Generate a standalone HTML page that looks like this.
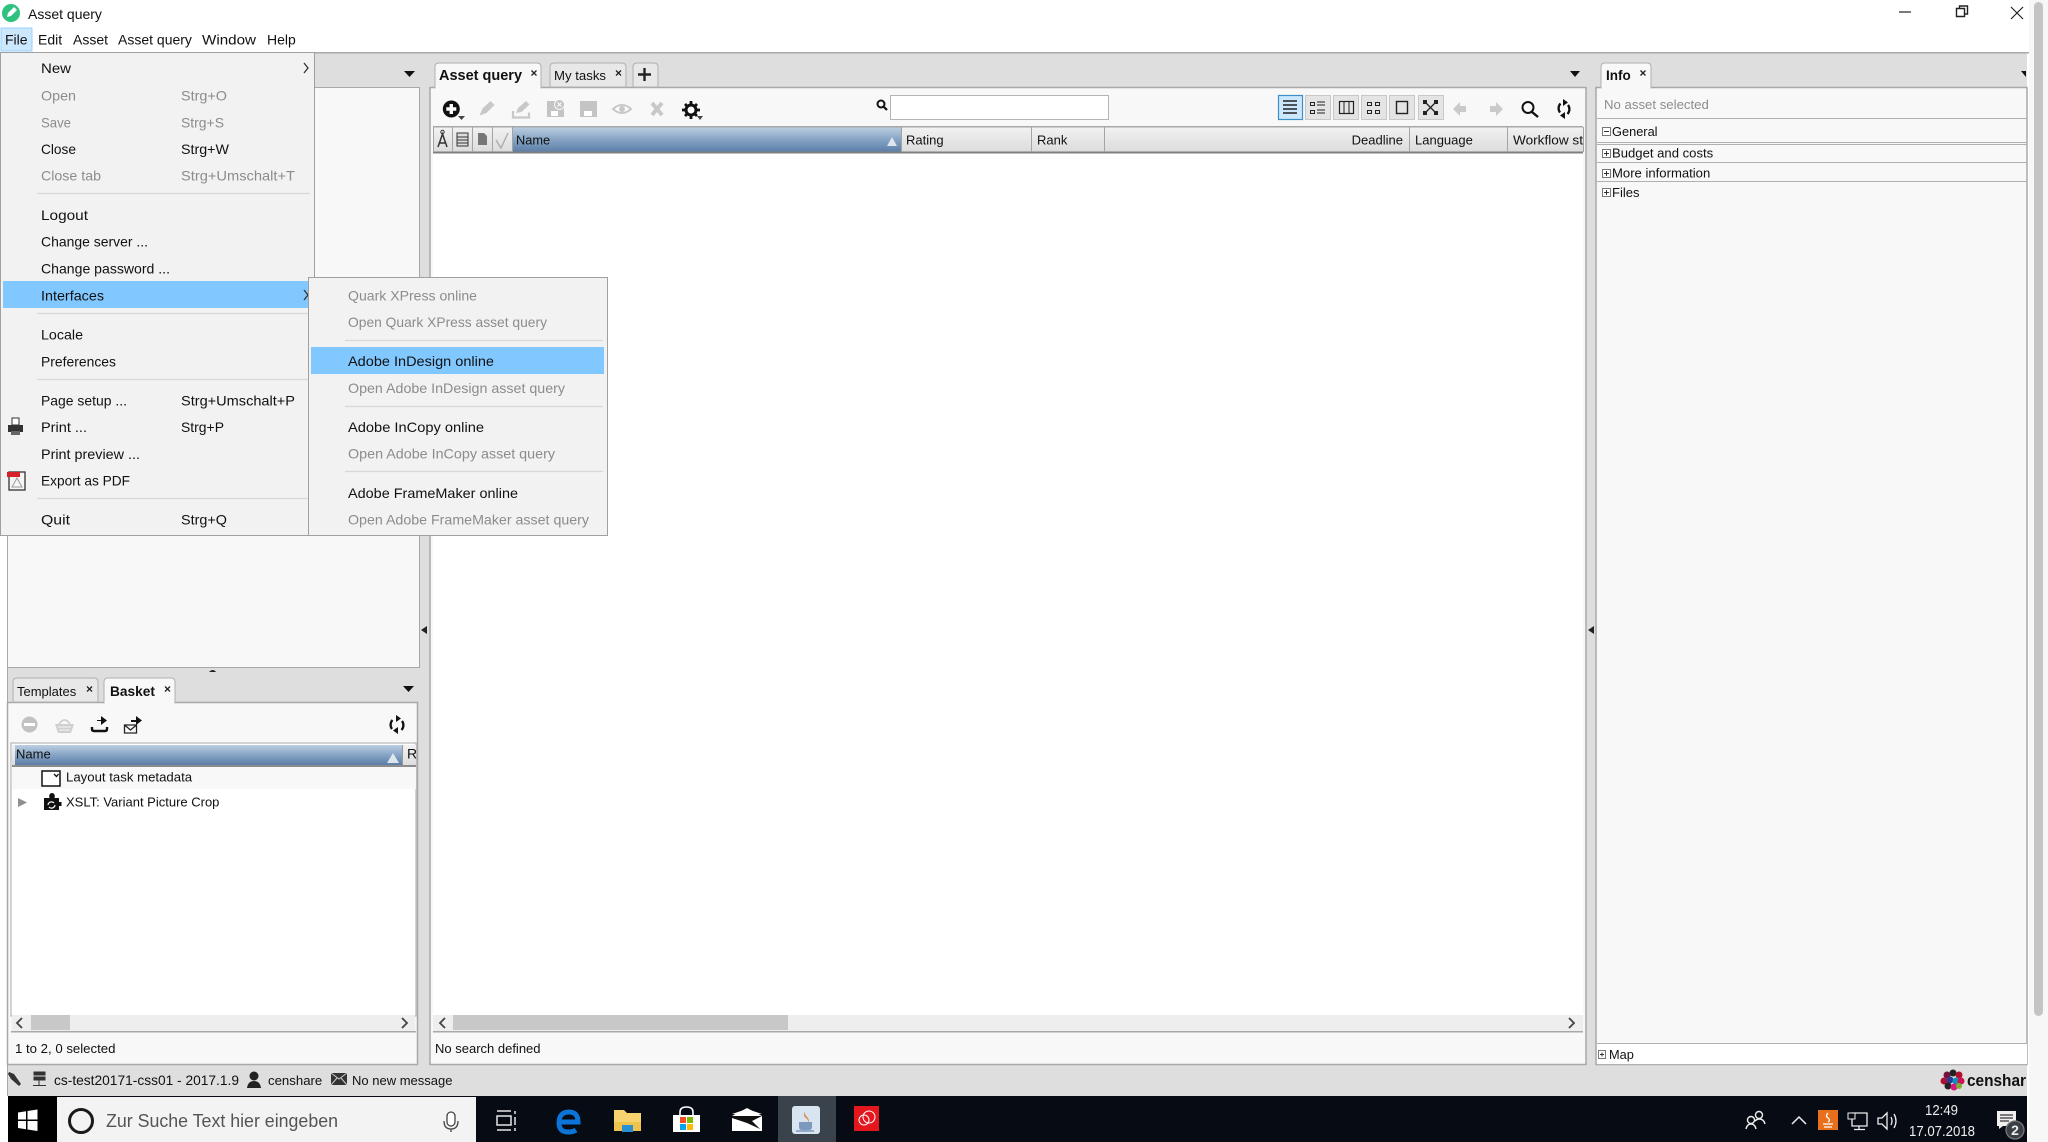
<!DOCTYPE html>
<html><head><meta charset="utf-8"><title>Asset query</title>
<style>
html,body{margin:0;padding:0;background:#fff;overflow:hidden;width:2048px;height:1142px}
svg{display:block;filter:blur(.35px)}
text{font-family:"Liberation Sans",sans-serif;font-size:14px;fill:#111}
.g{fill:#8c8c8c}
.b{font-weight:bold}
.s{font-size:13px}
</style></head><body>
<svg width="2048" height="1142" viewBox="0 0 2048 1142" xmlns="http://www.w3.org/2000/svg">
<defs>
<linearGradient id="blue" x1="0" y1="0" x2="0" y2="1"><stop offset="0" stop-color="#bccfe2"/><stop offset=".5" stop-color="#86a3c4"/><stop offset="1" stop-color="#5b7fa8"/></linearGradient>
<linearGradient id="hd" x1="0" y1="0" x2="0" y2="1"><stop offset="0" stop-color="#f2f2f2"/><stop offset="1" stop-color="#dcdcdc"/></linearGradient>
</defs>
<rect width="2048" height="1142" fill="#fff"/>
<!-- right browser strip -->
<rect x="2029" y="0" width="19" height="1142" fill="#f7f7f7"/>
<rect x="2034" y="2" width="9" height="1014" rx="4.500" fill="#c4c4c4"/>
<!-- title -->
<circle cx="11" cy="13" r="9" fill="#2ec27e"/><path d="M7 17l1-4 6-6 3 3-6 6z" fill="#fff"/>
<text x="28" y="19">Asset query</text>
<path d="M1899 12h12" stroke="#222" stroke-width="1.200"/>
<path d="M1956.500 8.500h8v8h-8zM1959.500 8.500v-2.500h8v8h-2.500" fill="none" stroke="#222" stroke-width="1.400"/>
<path d="M2011 7l12 12M2023 7l-12 12" stroke="#222" stroke-width="1.200"/>
<!-- menubar -->
<rect x="1" y="28" width="31" height="23" fill="#cce8ff" stroke="#99d1ff"/>
<text x="5" y="44.500">File</text><text x="38" y="44.500">Edit</text><text x="73" y="44.500">Asset</text><text x="118" y="44.500">Asset query</text><text x="202" y="44.500" textLength="54" lengthAdjust="spacingAndGlyphs">Window</text><text x="267" y="44.500">Help</text>
<!-- app bg -->
<rect x="7" y="52" width="2020" height="1044" fill="#dedede"/>
<rect x="0" y="52" width="2029" height="1.500" fill="#a8a8a8"/>
<rect x="7" y="52" width="1" height="1044" fill="#a8a8a8"/>
<!-- upper-left panel -->
<rect x="7.500" y="87.500" width="412" height="580" fill="#f8f8f8" stroke="#a8a8a8"/>
<path d="M404 71h11l-5.500 6z" fill="#111"/>
<!-- lower-left panel -->
<rect x="7.500" y="702.500" width="410" height="362" fill="#f8f8f8" stroke="#a8a8a8" stroke-width="1.500"/>
<path d="M13 702v-20q0-4 4-4h77q4 0 4 4v20z" fill="#e8e8e8" stroke="#b0b0b0"/>
<path d="M104 703v-21q0-4 4-4h63q4 0 4 4v21z" fill="#f8f8f8" stroke="#b0b0b0"/>
<rect x="104.500" y="702" width="70" height="2" fill="#f8f8f8"/>
<text x="17" y="696" style="font-size:13px">Templates</text><text x="110" y="696" class="b" style="font-size:13.700px">Basket</text>
<path d="M87 686.500l5 5M92 686.500l-5 5M165 686.500l5 5M170 686.500l-5 5" stroke="#222" stroke-width="1.300"/>
<path d="M403 686h11l-5.500 6z" fill="#111"/>
<path d="M209 672q4-4 7 0l-3 0z" fill="#222"/>
<!-- lower-left toolbar icons -->
<circle cx="29.500" cy="724.500" r="8" fill="#c2c2c2"/><rect x="24" y="723" width="11" height="3" fill="#fff"/>
<path d="M59 724q5.500-8 11 0" fill="none" stroke="#cfcfcf" stroke-width="1.800"/><path d="M55 724h19l-3 9H58z" fill="#cfcfcf"/><path d="M58 727h13M59 730h11" stroke="#f4f4f4"/>
<path d="M92 727v2q0 2 2 2h11q2 0 2-2v-2" fill="none" stroke="#111" stroke-width="2.400"/><path d="M97 720h4v-4l6 4.500-6 4.500v-4h-4z" fill="#111"/>
<path d="M124.500 725h12v8h-12zM124.500 725l6 5 6-5" fill="#fff" stroke="#222" stroke-width="1.300"/><path d="M131 720h5v-4l6 4.500-6 4.500v-3h-5z" fill="#111"/>
<path d="M392.500 720a7 7 0 0 0-.5 9M401.500 730a7 7 0 0 0 .5-9" fill="none" stroke="#111" stroke-width="2.300"/><path d="M396 715l5 3.500-5 3.500zM398 734l-5-3.500 5-3.500z" fill="#111"/>
<!-- lower-left table -->
<rect x="11" y="743" width="405" height="273" fill="#fff" stroke="#aaa"/>
<rect x="12" y="745" width="404" height="21" fill="url(#hd)"/>
<rect x="15" y="745" width="387" height="20" fill="url(#blue)"/>
<rect x="12" y="765" width="404" height="2" fill="#8c8c8c"/>
<path d="M402.500 745v20" stroke="#999"/>
<text x="16" y="758.500" style="font-size:13px">Name</text><text x="407" y="758.500">R</text>
<path d="M387 763l6-10 6 10z" fill="#dfe5ec"/>
<rect x="12" y="767" width="404" height="22" fill="#f8f8f8"/>
<rect x="42" y="771" width="18" height="15" fill="#fff" stroke="#111" stroke-width="1.500"/><path d="M54 774l2.500 2.500 2-2.500" fill="none" stroke="#111" stroke-width="1.300"/>
<text x="66" y="781.500" style="font-size:13.200px">Layout task metadata</text>
<path d="M18 798l9 4.500-9 4.500z" fill="#8f8f8f"/>
<path d="M44 798h5.500c-1-3 .5-5 2.500-5s3.500 2 2.500 5h4.500v4h2.500v4H59v4H44z" fill="#111"/><path d="M48 805a3.500 3.500 0 0 1 6-2M55 805a3.500 3.500 0 0 1-6 2" fill="none" stroke="#fff" stroke-width="1.200"/>
<text x="66" y="806.500" style="font-size:13px">XSLT: Variant Picture Crop</text>
<!-- lower-left scrollbar -->
<rect x="12" y="1015" width="403" height="16" fill="#eeeeee"/><rect x="31" y="1015" width="39" height="15" fill="#c8c8c8"/>
<path d="M22 1018l-5 5 5 5M402 1018l5 5-5 5" fill="none" stroke="#444" stroke-width="1.800"/>
<rect x="11" y="1031" width="405" height="1.500" fill="#a8a8a8"/>
<text x="15" y="1053" style="font-size:13.200px">1 to 2, 0 selected</text>
<!-- main panel -->
<rect x="430" y="87.500" width="1156" height="977" fill="#f8f8f8" stroke="#a8a8a8" stroke-width="1.500"/>
<path d="M435 88V67q0-4 4-4h98q4 0 4 4v21z" fill="#f8f8f8" stroke="#b0b0b0"/><rect x="435.500" y="86" width="105" height="3" fill="#f8f8f8"/>
<path d="M550 87V67q0-4 4-4h68q4 0 4 4v20z" fill="#e8e8e8" stroke="#b0b0b0"/>
<path d="M633 87V67q0-4 4-4h17q4 0 4 4v20z" fill="#e8e8e8" stroke="#b0b0b0"/>
<text x="439" y="80" class="b" style="font-size:14.500px">Asset query</text><text x="554" y="80" style="font-size:13.200px">My tasks</text>
<path d="M531.500 70.500l5 5M536.500 70.500l-5 5M616 70.500l5 5M621 70.500l-5 5" stroke="#222" stroke-width="1.300"/>
<path d="M644.500 68v13M638 74.500h13" stroke="#222" stroke-width="2.400"/>
<path d="M1570 71h10l-5 6z" fill="#111"/>
<!-- main toolbar left -->
<circle cx="451.300" cy="109" r="8.500" fill="#111"/><path d="M451.300 104v10M446.300 109h10" stroke="#fff" stroke-width="3.400"/><path d="M458 116h7l-3.500 4z" fill="#444"/>
<path d="M479.500 115.500l3-7 8-7.500 4 4-8 8z" fill="#c8c8c8"/>
<path d="M513 111v6.500h16v-5" fill="none" stroke="#c8c8c8" stroke-width="2.200"/><path d="M516 113l2-5 8-7 3.500 3.500-8 7.500z" fill="#c8c8c8"/>
<path d="M547 101h11v5h6v11h-17z" fill="#c4c4c4"/><circle cx="559.500" cy="104.500" r="5" fill="#c4c4c4" stroke="#f8f8f8"/><path d="M557.500 102.500l4 4M561.500 102.500l-4 4" stroke="#fff"/><rect x="551" y="111" width="7" height="5" fill="#fff"/>
<rect x="580" y="101" width="17" height="16" fill="#c4c4c4"/><rect x="584" y="111" width="8" height="5" fill="#fff"/>
<path d="M613 109q9-8 18 0q-9 8-18 0z" fill="#fff" stroke="#c8c8c8" stroke-width="2"/><circle cx="622" cy="109" r="3" fill="#c8c8c8"/>
<path d="M652 103l10 12M662 103l-10 12" stroke="#c8c8c8" stroke-width="4"/>
<circle cx="691" cy="110" r="5" fill="#fff" stroke="#111" stroke-width="3"/><path d="M691 101v4M691 115v4M682 110h4M696 110h4M685 104l3 3M694 113l3 3M697 104l-3 3M688 113l-3 3" stroke="#111" stroke-width="2.800"/><path d="M697 116h6l-3 4z" fill="#444"/>
<circle cx="881" cy="104" r="3.500" fill="none" stroke="#111" stroke-width="2"/><path d="M884 107l3 3" stroke="#111" stroke-width="2.200"/>
<rect x="890.500" y="95.500" width="218" height="24" fill="#fff" stroke="#b4b4b4"/>
<!-- view buttons -->
<rect x="1278.500" y="95.500" width="24" height="24" fill="#cce8ff" stroke="#3e8fc9" stroke-width="1.200"/>
<rect x="1305.500" y="95.500" width="25" height="24" fill="#e4e4e4" stroke="#c8c8c8"/><rect x="1333.500" y="95.500" width="25" height="24" fill="#e4e4e4" stroke="#c8c8c8"/><rect x="1361.500" y="95.500" width="25" height="24" fill="#e4e4e4" stroke="#c8c8c8"/><rect x="1389.500" y="95.500" width="25" height="24" fill="#e4e4e4" stroke="#c8c8c8"/><rect x="1418.500" y="95.500" width="25" height="24" fill="#e4e4e4" stroke="#c8c8c8"/>
<path d="M1283 101h14M1283 105h14M1283 109h14M1283 113h14" stroke="#222" stroke-width="1.400"/>
<path d="M1310.500 102.500h4v3h-4zM1310.500 110.500h4v3h-4z" fill="none" stroke="#222"/><path d="M1317 102h8M1317 105h8M1317 110h8M1317 113h8" stroke="#222"/>
<rect x="1339.500" y="101.500" width="14" height="12" fill="none" stroke="#222" stroke-width="1.200"/><path d="M1344 101v12M1349 101v12" stroke="#222"/>
<path d="M1367.500 102.500h4v3h-4zM1375.500 102.500h4v3h-4zM1367.500 110.500h4v3h-4zM1375.500 110.500h4v3h-4z" fill="none" stroke="#222"/>
<rect x="1396.500" y="101.500" width="11" height="12" fill="none" stroke="#222" stroke-width="1.400"/>
<path d="M1425 102l11 11M1436 102l-11 11" stroke="#222" stroke-width="1.300"/><path d="M1423 100h4v4h-4zM1434 100h4v4h-4zM1423 111h4v4h-4zM1434 111h4v4h-4z" fill="#222"/>
<path d="M1453 109l7-7v4h6v6h-6v4z" fill="#cacaca"/><path d="M1503 109l-7-7v4h-6v6h6v4z" fill="#cacaca"/>
<circle cx="1528" cy="107.500" r="5.500" fill="none" stroke="#111" stroke-width="2"/><path d="M1532 112l6 5" stroke="#111" stroke-width="2.400"/>
<path d="M1560.500 103.500a7 7 0 0 0-.5 9M1567.500 114a7 7 0 0 0 .5-9" fill="none" stroke="#111" stroke-width="2.300"/><path d="M1563 99l5 3.500-5 3.500zM1565 119l-5-3.500 5-3.500z" fill="#111"/>
<!-- table -->
<rect x="433" y="126.500" width="1150" height="889.500" fill="#fff"/>
<rect x="433" y="127" width="1150" height="25" fill="url(#hd)"/>
<rect x="513" y="127" width="388" height="25" fill="url(#blue)"/>
<rect x="433" y="126" width="1150" height="1.500" fill="#a8a8a8"/>
<rect x="433" y="151.500" width="1150" height="2" fill="#808080"/>
<path d="M433.500 127v25M452.500 127v25M472.500 127v25M492.500 127v25M512.500 127v25M901.500 127v25M1031.500 127v25M1104.500 127v25M1409.500 127v25M1507.500 127v25M1583.500 127v25" stroke="#a4a4a4"/>
<path d="M438 147l4.500-13 4.500 13M439.500 143h6" fill="none" stroke="#333" stroke-width="1.500"/><circle cx="442.500" cy="132" r="1.700" fill="none" stroke="#333"/>
<path d="M457 133h11v13h-11zM457 137h11M457 140h11M457 143h11" fill="#ddd" stroke="#333"/>
<path d="M478 133h6l3 3v9h-9z" fill="#777"/>
<path d="M496 140l5 8 7-15" fill="none" stroke="#aaa" stroke-width="1.300"/>
<text x="516" y="144.500" style="font-size:12.800px">Name</text><text x="906" y="144.500" class="s">Rating</text><text x="1037" y="144.500" class="s">Rank</text><text x="1403" y="144.500" text-anchor="end" class="s">Deadline</text><text x="1415" y="144.500" class="s">Language</text><text x="1513" y="144.500" class="s" textLength="70" lengthAdjust="spacingAndGlyphs">Workflow st</text>
<path d="M887 146l5-9 5 9z" fill="#dfe5ec"/>
<!-- main scrollbar -->
<rect x="433" y="1015" width="1150" height="16" fill="#eeeeee"/><rect x="453" y="1015" width="335" height="15" fill="#c8c8c8"/>
<path d="M445 1018l-5 5 5 5M1569 1018l5 5-5 5" fill="none" stroke="#444" stroke-width="1.800"/>
<rect x="433" y="1031" width="1150" height="1.500" fill="#a8a8a8"/>
<text x="435" y="1053" style="font-size:13px">No search defined</text>
<!-- splitters -->
<path d="M421 630l6-4v8z" fill="#222"/><path d="M1588 630l6-4v8z" fill="#222"/>
<!-- info panel -->
<rect x="1596" y="87.500" width="431" height="977" fill="#f8f8f8" stroke="#a8a8a8" stroke-width="1.500"/>
<path d="M1601 88V67q0-4 4-4h42q4 0 4 4v21z" fill="#f8f8f8" stroke="#b0b0b0"/><rect x="1601.500" y="86" width="49" height="3" fill="#f8f8f8"/>
<text x="1606" y="80" class="b" style="font-size:13.500px">Info</text><path d="M1640.500 70.500l5 5M1645.500 70.500l-5 5" stroke="#222" stroke-width="1.300"/>
<path d="M2021 71h5v6z" fill="#111"/>
<text x="1604" y="109" class="g" style="font-size:13.200px">No asset selected</text>
<path d="M1597 118.500h430M1597 142.500h430M1597 144.500h430M1597 162.500h430M1597 181.500h430M1597 1043.500h430M1597 1064.500h430" stroke="#b0b0b0"/>
<rect x="1597" y="1044" width="430" height="20" fill="#fff"/>
<g fill="#fff" stroke="#777"><rect x="1602.500" y="127.500" width="8" height="8"/><rect x="1602.500" y="149.500" width="8" height="8"/><rect x="1602.500" y="169.500" width="8" height="8"/><rect x="1602.500" y="188.500" width="8" height="8"/><rect x="1598.500" y="1050.500" width="7" height="8"/></g>
<path d="M1604 131.500h5M1604 153.500h5M1606.500 151v5M1604 173.500h5M1606.500 171v5M1604 192.500h5M1606.500 190v5M1600 1054.500h4M1602 1052.500v4" stroke="#333"/>
<text x="1612" y="136" style="font-size:12.800px">General</text><text x="1612" y="157.500" style="font-size:13.100px">Budget and costs</text><text x="1612" y="177.500" style="font-size:13.100px">More information</text><text x="1612" y="197" style="font-size:13px">Files</text><text x="1609" y="1059" style="font-size:12.800px">Map</text>
<!-- status bar icons -->
<rect x="0" y="1096" width="8" height="46" fill="#fff"/>
<path d="M9 1072l5 2 7 10-2 2-8-7-3-5z" fill="#333"/>
<path d="M34 1072h11v3H34zM34 1077h11v3H34zM39 1080v5M33 1085.500h13" fill="#333" stroke="#333"/>
<text x="54" y="1085" textLength="185" lengthAdjust="spacingAndGlyphs">cs-test20171-css01  - 2017.1.9</text>
<circle cx="254" cy="1076" r="4.500" fill="#222"/><path d="M247 1088q1-7 7-7t7 7z" fill="#222"/>
<text x="268" y="1085" style="font-size:13.200px">censhare</text>
<rect x="331" y="1073" width="16" height="12" fill="#333"/><path d="M331 1073l8 6 8-6M331 1085l6-7M347 1085l-6-7" fill="none" stroke="#ccc"/>
<text x="352" y="1085" style="font-size:13px">No new message</text>
<!-- censhare logo -->
<g><circle cx="1947" cy="1075" r="3.500" fill="#7a1040"/><circle cx="1953" cy="1073" r="3.500" fill="#222"/><circle cx="1959" cy="1075" r="3.500" fill="#b01030"/><circle cx="1944" cy="1081" r="3.500" fill="#b01030"/><circle cx="1950" cy="1080" r="3.500" fill="#2a3a90"/><circle cx="1956" cy="1081" r="3.500" fill="#1090c0"/><circle cx="1961" cy="1081" r="3.500" fill="#d01050"/><circle cx="1948" cy="1086" r="3.500" fill="#222"/><circle cx="1954" cy="1087" r="3.500" fill="#d81880"/><circle cx="1959" cy="1086" r="3" fill="#80b030"/></g>
<text x="1967" y="1086" style="font-size:17px;font-weight:bold" textLength="59" lengthAdjust="spacingAndGlyphs">censhar</text>
<!-- taskbar -->
<rect x="8" y="1096" width="2019" height="46" fill="#060b14"/>
<rect x="8" y="1096" width="49" height="46" fill="#000"/>
<path d="M18 1112.500l8-1.200v8.200h-8zM27.500 1111l10-1.500v10h-10zM18 1121h8v8.200l-8-1.200zM27.500 1121h10v10l-10-1.500z" fill="#fff"/>
<rect x="57" y="1097" width="419" height="45" fill="#f3f3f3"/>
<circle cx="81" cy="1121" r="11.500" fill="none" stroke="#1a1a1a" stroke-width="3"/>
<text x="106" y="1127" style="font-size:18px;fill:#555" textLength="232" lengthAdjust="spacingAndGlyphs">Zur Suche Text hier eingeben</text>
<rect x="447" y="1112" width="8" height="14" rx="4" fill="#fff" stroke="#444" stroke-width="1.300"/><path d="M444 1121q0 8 7 8t7-8M451 1129v3" fill="none" stroke="#444" stroke-width="1.300"/>
<path d="M497 1111h14M497 1116h14v9h-14zM497 1130h14M515 1111v3M515 1117v8M515 1128v3" fill="none" stroke="#e6e6e6" stroke-width="1.500"/>
<path d="M559 1122h19q0-10-9-10-10 0-10 11 0 9 9 9 5 0 8-2" fill="none" stroke="#0c74d6" stroke-width="5"/>
<path d="M614 1110h10l3 3h14v18h-27z" fill="#f6d36f"/><path d="M614 1122h27v9h-8v-5h-11v5h-8z" fill="#f0c24e"/><path d="M622 1125h11v7h-11z" fill="#2a90d4"/>
<path d="M673 1115h27v17h-27z" fill="#fff"/><path d="M680 1115v-3q0-5 6.500-5t6.500 5v3" fill="none" stroke="#fff" stroke-width="1.600"/><rect x="680" y="1117" width="6" height="6" fill="#f25022"/><rect x="687" y="1117" width="6" height="6" fill="#7fba00"/><rect x="680" y="1124" width="6" height="6" fill="#00a4ef"/><rect x="687" y="1124" width="6" height="6" fill="#ffb900"/>
<path d="M732 1116l15-8 15 8v15h-30z" fill="#fff"/><path d="M732 1116h30l-10 5 8 8-13-6-15-5z" fill="#111"/><path d="M732 1114l15-5 15 5-15 1z" fill="#fff"/>
<rect x="778" y="1096" width="58" height="46" fill="#3a424c"/>
<rect x="792" y="1106" width="28" height="28" rx="3" fill="#d8e4f0"/><path d="M806 1110q-4 5 0 8t0 6q5-3 1-7t-1-7z" fill="#e0843a"/><path d="M799 1122h13v5q0 3-3 3h-7q-3 0-3-3z" fill="#7d99bd"/><path d="M796 1131h18" stroke="#7d99bd" stroke-width="1.500"/>
<rect x="854" y="1106" width="25" height="25" fill="#e4171f"/><circle cx="864" cy="1120" r="5" fill="none" stroke="#fff"/><circle cx="869" cy="1117" r="6" fill="none" stroke="#fff"/>
<!-- tray -->
<circle cx="1759" cy="1115" r="3.500" fill="none" stroke="#eee" stroke-width="1.400"/><circle cx="1751" cy="1120" r="3.500" fill="none" stroke="#eee" stroke-width="1.400"/><path d="M1746 1129q1-5 5-5t5 5M1755 1121q2-2 4-2 5 0 6 5" fill="none" stroke="#eee" stroke-width="1.400"/>
<path d="M1792 1124l7-7 7 7" fill="none" stroke="#eee" stroke-width="1.500"/>
<rect x="1818" y="1110" width="20" height="20" fill="#e8701c"/><path d="M1828 1113q-3 3 0 5t0 4M1823 1124h10M1824 1127h8" fill="none" stroke="#fff" stroke-width="1.300"/>
<path d="M1852 1113h15v13h-15zM1859 1126v3M1854 1129.500h11" fill="none" stroke="#eee" stroke-width="1.300"/><rect x="1848" y="1113" width="7" height="6" fill="#060b14" stroke="#eee"/>
<path d="M1878 1118h4l5-5v16l-5-5h-4zM1891 1117q2 4 0 8M1894 1114q4 7 0 14" fill="none" stroke="#eee" stroke-width="1.300"/>
<text x="1925" y="1115" style="font-size:15px;fill:#eee" textLength="33" lengthAdjust="spacingAndGlyphs">12:49</text>
<text x="1909" y="1136" style="font-size:15px;fill:#eee" textLength="66" lengthAdjust="spacingAndGlyphs">17.07.2018</text>
<path d="M1997 1111h19v15h-13l-4 3v-3h-2z" fill="#f0f0f0"/><path d="M2000 1115h13M2000 1118h13M2000 1121h9" stroke="#333" stroke-width="1.200"/>
<circle cx="2015" cy="1130" r="9" fill="#3a3f45" stroke="#777" stroke-width="1.300"/><text x="2015" y="1135" text-anchor="middle" style="font-size:14px;font-weight:bold;fill:#eee">2</text>
<!-- File menu -->
<rect x="0.500" y="52.500" width="314" height="483" fill="#f2f2f2" stroke="#a0a0a0"/>
<path d="M37 193.500h273M37 313.500h273M37 379.500h273M37 498.500h273" stroke="#d8d8d8" stroke-width="1.300"/>
<rect x="3" y="281" width="307" height="27" fill="#80c8ff"/>
<text x="41" y="73" textLength="30" lengthAdjust="spacingAndGlyphs">New</text>
<text x="41" y="100.500" class="g" textLength="35" lengthAdjust="spacingAndGlyphs">Open</text><text x="181" y="100.500" class="g" textLength="46" lengthAdjust="spacingAndGlyphs">Strg+O</text>
<text x="41" y="127.500" class="g" textLength="30" lengthAdjust="spacingAndGlyphs">Save</text><text x="181" y="127.500" class="g" textLength="43" lengthAdjust="spacingAndGlyphs">Strg+S</text>
<text x="41" y="154" textLength="35" lengthAdjust="spacingAndGlyphs">Close</text><text x="181" y="154" textLength="48" lengthAdjust="spacingAndGlyphs">Strg+W</text>
<text x="41" y="180.500" class="g" textLength="60" lengthAdjust="spacingAndGlyphs">Close tab</text><text x="181" y="180.500" class="g" textLength="114" lengthAdjust="spacingAndGlyphs">Strg+Umschalt+T</text>
<text x="41" y="220" textLength="47" lengthAdjust="spacingAndGlyphs">Logout</text><text x="41" y="246.500" textLength="107" lengthAdjust="spacingAndGlyphs">Change server ...</text><text x="41" y="273.500" textLength="129" lengthAdjust="spacingAndGlyphs">Change password ...</text>
<text x="41" y="300.500" textLength="63" lengthAdjust="spacingAndGlyphs">Interfaces</text><text x="41" y="339.500" textLength="42" lengthAdjust="spacingAndGlyphs">Locale</text><text x="41" y="366.500" textLength="75" lengthAdjust="spacingAndGlyphs">Preferences</text>
<text x="41" y="405.500" textLength="86" lengthAdjust="spacingAndGlyphs">Page setup ...</text><text x="181" y="405.500" textLength="114" lengthAdjust="spacingAndGlyphs">Strg+Umschalt+P</text>
<text x="41" y="432" textLength="46" lengthAdjust="spacingAndGlyphs">Print ...</text><text x="181" y="432" textLength="43" lengthAdjust="spacingAndGlyphs">Strg+P</text>
<text x="41" y="459" textLength="99" lengthAdjust="spacingAndGlyphs">Print preview ...</text><text x="41" y="485.500" textLength="89" lengthAdjust="spacingAndGlyphs">Export as PDF</text>
<text x="41" y="524.500" textLength="29" lengthAdjust="spacingAndGlyphs">Quit</text><text x="181" y="524.500" textLength="46" lengthAdjust="spacingAndGlyphs">Strg+Q</text>
<path d="M304 63l4 5-4 5M304 290l4 5-4 5" fill="none" stroke="#333" stroke-width="1.300"/>
<path d="M12 418h7v7h-7z" fill="#fff" stroke="#333"/><path d="M8 425h15v7H8z" fill="#333"/><path d="M11 431h9v4h-9z" fill="#666"/>
<rect x="9" y="472" width="16" height="18" fill="#f4f4f4" stroke="#333" stroke-width="1.300"/><rect x="7" y="472" width="13" height="5" fill="#d8202a"/><path d="M12 487l5-9 5 9z" fill="none" stroke="#999"/>
<!-- Submenu -->
<rect x="308.500" y="277.500" width="299" height="258" fill="#f2f2f2" stroke="#a0a0a0"/>
<path d="M345 340.500h258M345 406.500h258M345 471.500h258" stroke="#d8d8d8" stroke-width="1.300"/>
<rect x="311" y="347" width="293" height="27" fill="#80c8ff"/>
<text x="348" y="300.500" class="g" textLength="129" lengthAdjust="spacingAndGlyphs">Quark XPress online</text><text x="348" y="327" class="g" textLength="199" lengthAdjust="spacingAndGlyphs">Open Quark XPress asset query</text>
<text x="348" y="366" textLength="146" lengthAdjust="spacingAndGlyphs">Adobe InDesign online</text><text x="348" y="393" class="g" textLength="217" lengthAdjust="spacingAndGlyphs">Open Adobe InDesign asset query</text>
<text x="348" y="432" textLength="136" lengthAdjust="spacingAndGlyphs">Adobe InCopy online</text><text x="348" y="458.500" class="g" textLength="207" lengthAdjust="spacingAndGlyphs">Open Adobe InCopy asset query</text>
<text x="348" y="498" textLength="170" lengthAdjust="spacingAndGlyphs">Adobe FrameMaker online</text><text x="348" y="524.500" class="g" textLength="241" lengthAdjust="spacingAndGlyphs">Open Adobe FrameMaker asset query</text>
</svg>
</body></html>
